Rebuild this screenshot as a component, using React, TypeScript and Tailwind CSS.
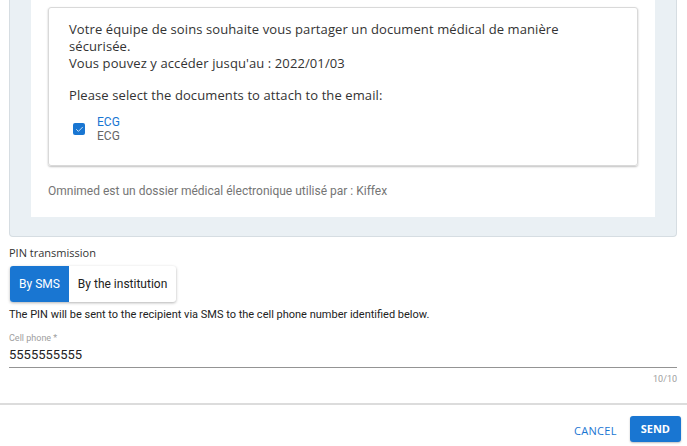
import { Check } from 'lucide-react';

const poppins = { fontFamily: '"Open Sans", "Noto Sans", sans-serif' };

export default function App() {
  return (
    <div className="flex h-[446px] w-[687px] flex-col overflow-hidden bg-white font-['Roboto',sans-serif]">
      <div className="flex flex-1 flex-col pl-[9px] pr-2.5">
        {/* email preview */}
        <div className="-mt-px rounded-b border border-t-0 border-[#d6dde2] bg-[#eaf0f4] px-[21px] pb-[19px]">
          <div className="bg-white px-[17px] pt-2 pb-[18px]">
            <div className="rounded-[3px] border border-[#d9d9d9] px-5 pt-[13px] pb-[22px] text-[13px] leading-[17px] text-[#333] shadow-[0_1px_2px_rgba(0,0,0,0.25)] font-['Open_Sans',sans-serif] tracking-[0.1px]">
              <p>
                Votre équipe de soins souhaite vous partager un document médical de manière
                <br />
                sécurisée.
              </p>
              <p>Vous pouvez y accéder jusqu'au : 2022/01/03</p>
              <p className="mt-[15px]">Please select the documents to attach to the email:</p>
              <div className="mt-[11px] flex items-center gap-3 pl-1 font-['Roboto',sans-serif] text-[12px] leading-[14px] tracking-normal">
                <span className="flex h-[12px] w-[12px] items-center justify-center rounded-[2px] bg-[#1976d2]">
                  <Check className="h-[9px] w-[9px] text-white" strokeWidth={2} />
                </span>
                <div>
                  <div className="text-[#1976d2]">ECG</div>
                  <div className="text-[#666]">ECG</div>
                </div>
              </div>
            </div>
            <p className="mt-[17px] text-[12px] leading-[16px] text-[#757575]">
              Omnimed est un dossier médical électronique utilisé par : Kiffex
            </p>
          </div>
        </div>

        {/* PIN */}
        <p className="mt-[9px] text-[11px] leading-[14px] text-[#333]" style={poppins}>PIN transmission</p>
        <div className="mt-[6px] ml-px flex h-[36px] w-fit overflow-hidden rounded-[3px] bg-white text-[12px] shadow-[0_1px_3px_rgba(0,0,0,0.3)]">
          <button className="bg-[#1976d2] px-[9px] text-white">By SMS</button>
          <button className="px-[9px] text-[#222]">By the institution</button>
        </div>
        <p className="mt-[6px] text-[11px] leading-[14px] text-[#222]">
          The PIN will be sent to the recipient via SMS to the cell phone number identified below.
        </p>

        <div className="mt-[11px]">
          <div className="text-[9px] leading-[11px] text-[#9e9e9e]">Cell phone *</div>
          <div className="mt-[3px] border-b border-[#949494] pb-[5px] text-[13px] leading-[15px] text-[#222]">5555555555</div>
          <div className="mt-[6px] text-right text-[9px] leading-[11px] text-[#9e9e9e]">10/10</div>
        </div>
      </div>

      <div className="mt-auto flex h-[43px] items-start justify-end gap-[13px] border-t-2 border-[#dcdcdc] pt-[11px] pr-1.5">
        <button className="mt-[7px] text-[11px] font-medium tracking-[0.3px] text-[#1976d2]" style={poppins}>CANCEL</button>
        <button className="h-[26px] rounded-[3px] bg-[#1976d2] px-[11px] text-[11px] font-bold text-white shadow-[0_1px_2px_rgba(0,0,0,0.25)]" style={poppins}>SEND</button>
      </div>
    </div>
  );
}
